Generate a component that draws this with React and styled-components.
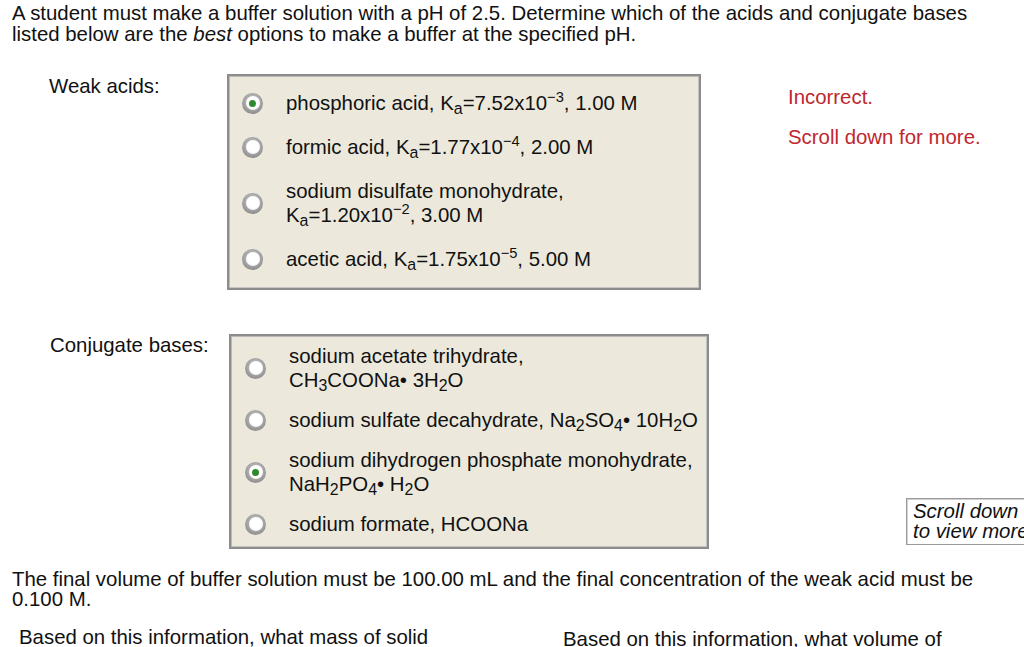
import React from 'react';
import styled, { createGlobalStyle } from 'styled-components';

const GlobalStyle = createGlobalStyle`
  html, body {
    margin: 0;
    padding: 0;
    background: #fff;
    overflow: hidden;
  }
  body {
    font-family: "Liberation Sans", Arial, sans-serif;
    color: #111;
  }
`;

const Page = styled.div`
  width: 1024px;
  height: 647px;
  overflow: hidden;
  padding: 3px 0 0 12px;
  box-sizing: border-box;
  font-size: 20.4px;
`;

const Prompt = styled.p`
  margin: 0;
  line-height: 21px;
`;

const Section = styled.div`
  display: flex;
  align-items: stretch;
  margin-top: ${p => p.$top}px;
`;

const Label = styled.div`
  width: ${p => p.$w}px;
  flex: none;
  box-sizing: border-box;
  padding-left: ${p => p.$indent}px;
  padding-top: ${p => p.$pt}px;
  line-height: 22px;
`;

const ChoiceBox = styled.div`
  width: ${p => p.$w}px;
  flex: none;
  box-sizing: border-box;
  background: #ece9dc;
  border: 2px solid #8c8c8c;
  box-shadow: inset 1px 1px 0 #b9b9b9, inset -1px -1px 0 #c4c4c4;
  padding: ${p => p.$pad};
`;

const Option = styled.div`
  display: flex;
  align-items: center;
  padding: ${p => p.$py}px 0;
`;

const Radio = styled.span`
  position: relative;
  flex: none;
  width: 21px;
  height: 21px;
  margin: 0 ${p => p.$gap}px 0 ${p => p.$left}px;
  border-radius: 50%;
  background: radial-gradient(circle at 50% 40%, #d0d0d0 0%, #949494 70%, #707070 100%);
  display: flex;
  align-items: center;
  justify-content: center;

  &::before {
    content: '';
    width: 14px;
    height: 14px;
    border-radius: 50%;
    background: radial-gradient(circle at 50% 40%, #ffffff 55%, #e4e4e4 100%);
  }

  &::after {
    content: '';
    position: absolute;
    width: 7px;
    height: 7px;
    border-radius: 50%;
    background: #2f8a2f;
    display: ${p => (p.$checked ? 'block' : 'none')};
  }
`;

const OptionText = styled.div`
  line-height: 24px;

  sub, sup {
    line-height: 0;
  }
  sub {
    font-size: 0.78em;
    vertical-align: -0.25em;
  }
  sup {
    font-size: 0.72em;
    vertical-align: 0.55em;
  }
`;

const Feedback = styled.div`
  padding-left: 87px;
  color: #c0272d;
  display: flex;
  flex-direction: column;
  gap: 18px;
  padding-top: 12px;
  line-height: 22px;
`;

const Side = styled.div`
  flex: 1;
  display: flex;
  align-items: flex-end;
  padding-left: 197px;
  padding-bottom: 4px;
`;

const ScrollHint = styled.div`
  flex: none;
  width: 150px;
  border: 1px solid #9a9a9a;
  box-shadow: inset 1px 1px 0 #d0d0d0;
  padding: 2px 6px 3px 6px;
  font-style: italic;
  line-height: 20px;
  white-space: nowrap;
  background: #fff;
`;

const Info = styled.p`
  margin: 20px 0 0 0;
  line-height: 20px;
`;

const Questions = styled.div`
  display: grid;
  grid-template-columns: 544px 1fr;
  padding-left: 7px;
  margin-top: 17px;
  line-height: 22px;
`;

const Question = styled.div`
  padding-top: ${p => p.$pt}px;
`;

const Ka = () => (
  <>K<sub>a</sub>=</>
);

const acids = [
  { checked: true, text: <>phosphoric acid, <Ka />7.52x10<sup>−3</sup>, 1.00 M</> },
  { text: <>formic acid, <Ka />1.77x10<sup>−4</sup>, 2.00 M</> },
  { text: <>sodium disulfate monohydrate,<br /><Ka />1.20x10<sup>−2</sup>, 3.00 M</> },
  { text: <>acetic acid, <Ka />1.75x10<sup>−5</sup>, 5.00 M</> },
];

const bases = [
  { text: <>sodium acetate trihydrate,<br />CH<sub>3</sub>COONa• 3H<sub>2</sub>O</> },
  { text: <>sodium sulfate decahydrate, Na<sub>2</sub>SO<sub>4</sub>• 10H<sub>2</sub>O</> },
  { checked: true, text: <>sodium dihydrogen phosphate monohydrate,<br />NaH<sub>2</sub>PO<sub>4</sub>• H<sub>2</sub>O</> },
  { text: <>sodium formate, HCOONa</> },
];

const Choices = ({ items, py, left, gap }) =>
  items.map((item, i) => (
    <Option key={i} $py={py}>
      <Radio $checked={item.checked} $left={left} $gap={gap} />
      <OptionText>{item.text}</OptionText>
    </Option>
  ));

export default function App() {
  return (
    <Page>
      <GlobalStyle />
      <Prompt>
        A student must make a buffer solution with a pH of 2.5. Determine which of the acids and conjugate bases
        <br />
        listed below are the <em>best</em> options to make a buffer at the specified pH.
      </Prompt>

      <Section $top={29}>
        <Label $w={215} $indent={37} $pt={1}>Weak acids:</Label>
        <ChoiceBox $w={474} $pad="5px 0 7px 0">
          <Choices items={acids} py={10} left={13} gap={23} />
        </ChoiceBox>
        <Feedback>
          <div>Incorrect.</div>
          <div>Scroll down for more.</div>
        </Feedback>
      </Section>

      <Section $top={44}>
        <Label $w={217} $indent={38} $pt={0}>Conjugate bases:</Label>
        <ChoiceBox $w={480} $pad="0 0 3px 0">
          <Choices items={bases} py={8} left={14} gap={23} />
        </ChoiceBox>
        <Side>
          <ScrollHint>
            Scroll down
            <br />
            to view more
          </ScrollHint>
        </Side>
      </Section>

      <Info>
        The final volume of buffer solution must be 100.00 mL and the final concentration of the weak acid must be
        <br />
        0.100 M.
      </Info>

      <Questions>
        <Question $pt={0}>Based on this information, what mass of solid</Question>
        <Question $pt={2}>Based on this information, what volume of</Question>
      </Questions>
    </Page>
  );
}
